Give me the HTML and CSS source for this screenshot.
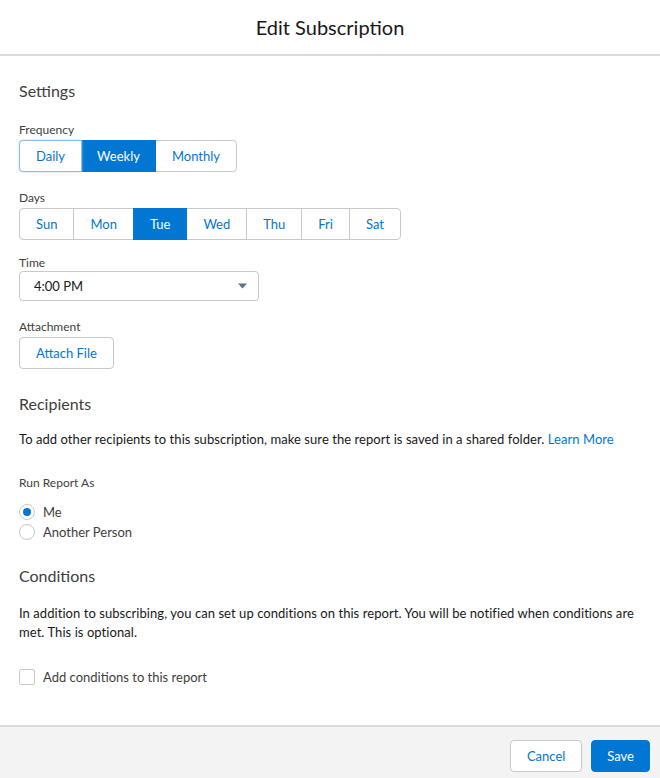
FILE: index.html
```html
<!DOCTYPE html>
<html>
<head>
<meta charset="utf-8">
<link rel="stylesheet" href="styles.css">
</head>
<body>
<div class="modal">
  <header class="modal-header"><h1 class="modal-title">Edit Subscription</h1></header>
  <main class="modal-body">
    <h2 class="section-title first">Settings</h2>

    <div class="field freq">
      <div class="field-label">Frequency</div>
      <div class="btn-group">
        <button class="seg focus">Daily</button>
        <button class="seg selected">Weekly</button>
        <button class="seg">Monthly</button>
      </div>
    </div>

    <div class="field days">
      <div class="field-label">Days</div>
      <div class="btn-group">
        <button class="seg">Sun</button>
        <button class="seg">Mon</button>
        <button class="seg selected">Tue</button>
        <button class="seg">Wed</button>
        <button class="seg">Thu</button>
        <button class="seg">Fri</button>
        <button class="seg">Sat</button>
      </div>
    </div>

    <div class="field time">
      <div class="field-label">Time</div>
      <div class="select">
        <span class="select-value">4:00 PM</span>
        <svg class="select-arrow" width="9" height="6" viewBox="0 0 9 6"><path d="M0 0.5h9L4.5 5.5z" fill="#5c6f8c"/></svg>
      </div>
    </div>

    <div class="field attach">
      <div class="field-label">Attachment</div>
      <button class="btn">Attach File</button>
    </div>

    <h2 class="section-title">Recipients</h2>
    <p class="text">To add other recipients to this subscription, make sure the report is saved in a shared folder. <a class="link" href="#">Learn More</a></p>

    <div class="field-label run-label">Run Report As</div>
    <div class="radio-row"><span class="radio checked"></span><span class="opt-label">Me</span></div>
    <div class="radio-row"><span class="radio"></span><span class="opt-label">Another Person</span></div>

    <h2 class="section-title cond-title">Conditions</h2>
    <p class="text cond-text">In addition to subscribing, you can set up conditions on this report. You will be notified when conditions are met. This is optional.</p>

    <div class="check-row"><span class="checkbox"></span><span class="opt-label">Add conditions to this report</span></div>
  </main>
  <footer class="modal-footer">
    <button class="btn">Cancel</button>
    <button class="btn brand">Save</button>
  </footer>
</div>
</body>
</html>
```
FILE: styles.css
```css
* { box-sizing: border-box; }
html, body { margin: 0; padding: 0; background: #fff; }
body {
  font-family: "Lato", "Liberation Sans", sans-serif;
  font-size: 13px;
  color: #181818;
  width: 660px;
  height: 778px;
  overflow: hidden;
}
.modal { display: flex; flex-direction: column; height: 778px; }
.modal-header {
  height: 56px;
  border-bottom: 2px solid #dddbda;
  display: flex;
  align-items: center;
  justify-content: center;
}
.modal-title {
  margin: 0;
  font-size: 20px;
  font-weight: 400;
  line-height: 24px;
  color: #181818;
}
.modal-body { flex: 1; padding: 0 19px; }
.section-title {
  margin: 25px 0 0;
  font-size: 16px;
  font-weight: 400;
  line-height: 20px;
  color: #3e3e3c;
}
.field-label {
  font-size: 12px;
  line-height: 16px;
  color: #3e3e3c;
  margin-bottom: 2px;
}
.field.freq { margin-top: 21px; }
.field.days { margin-top: 18px; }
.field.time { margin-top: 15px; }
.field.time .field-label { margin-bottom: 0; }
.field.attach { margin-top: 18px; }
.btn-group { display: inline-flex; }
.seg, .btn {
  font-family: inherit;
  font-size: 13px;
  height: 32px;
  padding: 0 16px;
  background: #fff;
  color: #0176d3;
  border: 1px solid #c9c9c9;
  border-radius: 4px;
  line-height: 30px;
  cursor: pointer;
}
.seg { border-radius: 0; margin-left: -1px; }
.seg:first-child { margin-left: 0; border-radius: 4px 0 0 4px; }
.seg:last-child { border-radius: 0 4px 4px 0; }
.seg.selected { background: #0176d3; border-color: #0176d3; color: #fff; position: relative; z-index: 1; }
.freq .seg.selected { padding: 0 15px; }
.seg.focus { border-color: #8fbbe8; box-shadow: 0 0 2px #a9cdf0; position: relative; z-index: 2; }
.select {
  width: 240px;
  height: 30px;
  border: 1px solid #c9c9c9;
  border-radius: 4px;
  display: flex;
  align-items: center;
  justify-content: space-between;
  padding: 0 11px 0 14px;
}
.select-value { color: #181818; }
.text { margin: 16px 0 0; line-height: 19px; letter-spacing: 0.06px; }
.cond-text { margin-top: 18px; }
.link { color: #0176d3; text-decoration: none; }
.run-label { margin-top: 26px; margin-bottom: 11px; }
.radio-row, .check-row { display: flex; align-items: center; height: 20px; }
.radio {
  width: 16px; height: 16px;
  border: 1px solid #c9c9c9;
  border-radius: 50%;
  margin-right: 8px;
  display: flex; align-items: center; justify-content: center;
}
.radio.checked::after {
  content: "";
  width: 8px; height: 8px; border-radius: 50%;
  background: #0176d3;
}
.cond-title { margin-top: 24px; }
.check-row { margin-top: 25px; }
.checkbox {
  width: 16px; height: 16px;
  border: 1px solid #c9c9c9;
  border-radius: 2px;
  margin-right: 8px;
}
.opt-label { color: #3e3e3c; }
.modal-footer {
  height: 53px;
  border-top: 2px solid #dddbda;
  background: #f3f3f3;
  display: flex;
  justify-content: flex-end;
  align-items: flex-start;
  gap: 9px;
  padding: 13px 10px 0;
}
.btn.brand { background: #0176d3; border-color: #0176d3; color: #fff; padding: 0 15px; }
```
